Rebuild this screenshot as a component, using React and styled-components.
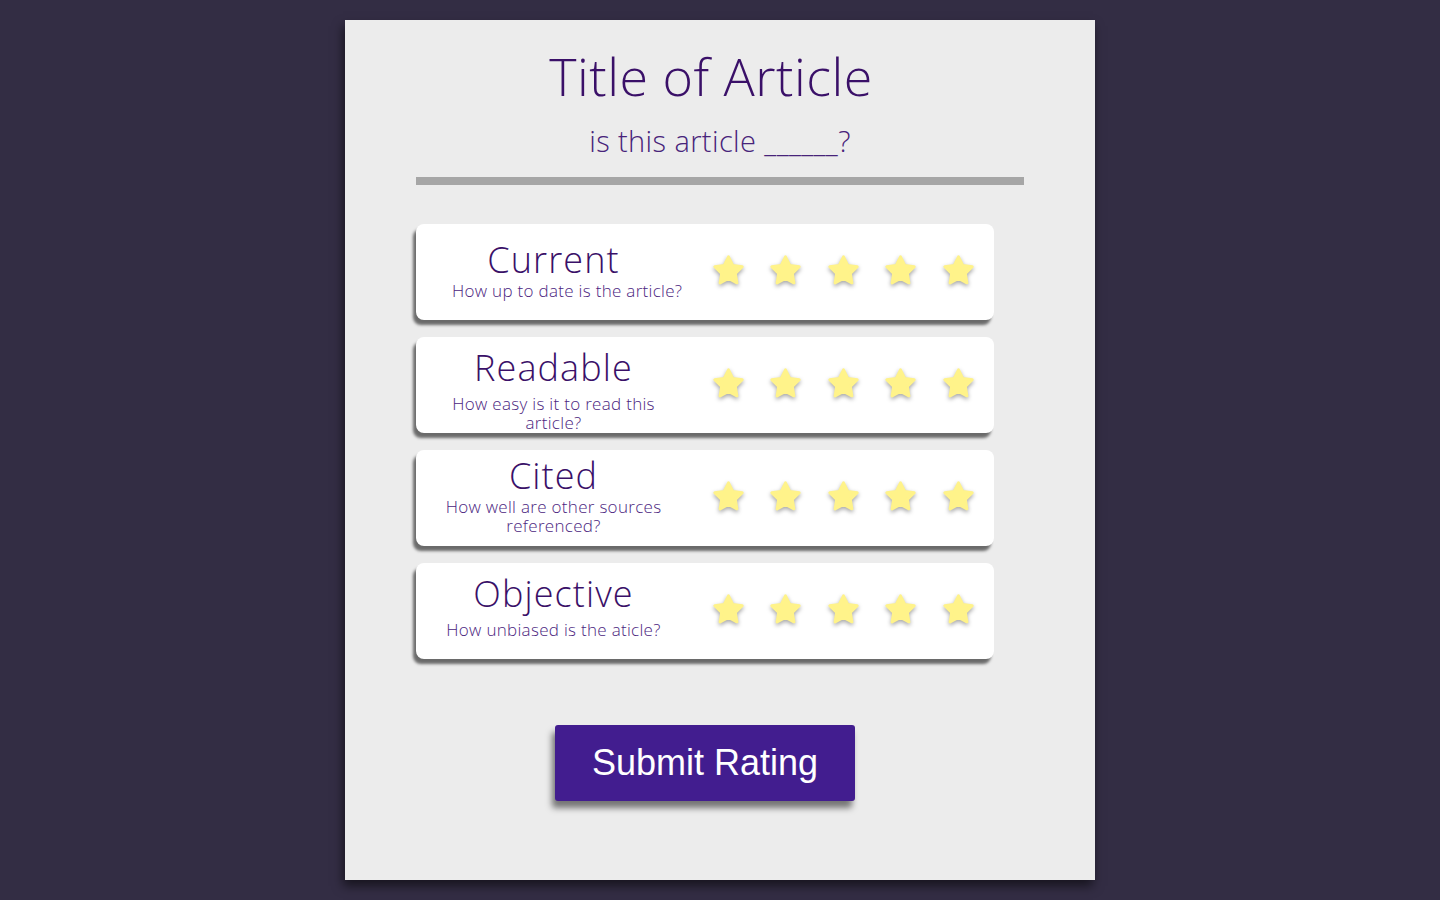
import React from 'react';
import styled, { createGlobalStyle } from 'styled-components';

const GlobalStyle = createGlobalStyle`
  body {
    margin: 0;
    background: #332d44;
    font-family: 'Open Sans', 'Noto Sans', sans-serif;
  }
`;

const Page = styled.div`
  display: flex;
  justify-content: center;
  padding-top: 20px;
  min-height: 100vh;
  box-sizing: border-box;
`;

const Panel = styled.main`
  width: 750px;
  height: 860px;
  box-sizing: border-box;
  padding: 0 71px;
  background: #ececec;
  box-shadow: -2px 6px 10px rgba(0, 0, 0, 0.55);
  display: flex;
  flex-direction: column;
`;

const Title = styled.h1`
  margin: 23px 18px 0 0;
  text-align: center;
  font-weight: 300;
  font-size: 52px;
  line-height: 66px;
  color: #3a1068;
  letter-spacing: 0.5px;
`;

const Question = styled.h2`
  margin: 12px 0 0;
  text-align: center;
  font-weight: 300;
  font-size: 29px;
  line-height: 40px;
  color: #47237a;
  letter-spacing: 0.4px;
`;

const Divider = styled.hr`
  margin: 16px 0 0;
  border: none;
  height: 8px;
  background: #a6a6a6;
`;

const RatingList = styled.section`
  width: 578px;
  margin-top: 39px;
  display: flex;
  flex-direction: column;
  gap: 17px;
`;

const RatingCard = styled.div`
  height: 96px;
  display: flex;
  align-items: flex-start;
  background: #ffffff;
  border-radius: 8px;
  box-shadow: -3px 5px 3px rgba(0, 0, 0, 0.55);
`;

const Criterion = styled.div`
  width: 215px;
  margin-left: 30px;
  flex-shrink: 0;
  display: flex;
  flex-direction: column;
  align-items: center;
  text-align: center;
  padding-top: ${(p) => p.$top}px;
`;

const Label = styled.div`
  font-weight: 300;
  font-size: 36px;
  line-height: 36px;
  color: #3a1068;
  letter-spacing: 1.1px;
  margin-bottom: ${(p) => p.$gap}px;
`;

const Hint = styled.div`
  align-self: ${(p) => (p.$overflow ? 'flex-start' : 'center')};
  margin-left: ${(p) => (p.$overflow ? '6px' : '0')};
  font-weight: 300;
  font-size: 17px;
  line-height: 19px;
  letter-spacing: 0.3px;
  color: #4b2580;
  white-space: nowrap;
`;

const Stars = styled.div`
  align-self: center;
  display: flex;
  gap: 22.5px;
  margin: 0 0 4px 49.5px;
`;

const StarIcon = styled.svg`
  width: 35px;
  height: 35px;
  filter: drop-shadow(0 2px 2px rgba(0, 0, 0, 0.35));
`;

const SubmitButton = styled.button`
  align-self: center;
  margin: 66px 0 0 -30px;
  width: 300px;
  height: 76px;
  border: none;
  border-radius: 3px;
  background: #421d8f;
  color: #ffffff;
  font-family: 'Liberation Sans', Arial, sans-serif;
  font-size: 36px;
  box-shadow: -3px 7px 6px rgba(0, 0, 0, 0.5);
  cursor: pointer;
`;

const criteria = [
  { label: 'Current', hint: ['How up to date is the article?'], top: 18, gap: 3, overflow: true },
  { label: 'Readable', hint: ['How easy is it to read this', 'article?'], top: 13, gap: 8 },
  { label: 'Cited', hint: ['How well are other sources', 'referenced?'], top: 8, gap: 3 },
  { label: 'Objective', hint: ['How unbiased is the aticle?'], top: 13, gap: 8 },
];

function Star() {
  return (
    <StarIcon viewBox="0 0 24 24">
      <path
        d="M12 2.6l2.9 5.9 6.5.9-4.7 4.6 1.1 6.5L12 17.4l-5.8 3.1 1.1-6.5-4.7-4.6 6.5-.9z"
        fill="#fff38a"
        stroke="#fff38a"
        strokeWidth="2"
        strokeLinejoin="round"
      />
    </StarIcon>
  );
}

export default function App() {
  return (
    <Page>
      <GlobalStyle />
      <Panel>
        <Title>Title of Article</Title>
        <Question>is this article ______?</Question>
        <Divider />
        <RatingList>
          {criteria.map((c) => (
            <RatingCard key={c.label}>
              <Criterion $top={c.top}>
                <Label $gap={c.gap}>{c.label}</Label>
                {c.hint.map((line) => (
                  <Hint key={line} $overflow={c.overflow}>
                    {line}
                  </Hint>
                ))}
              </Criterion>
              <Stars>
                {[1, 2, 3, 4, 5].map((n) => (
                  <Star key={n} />
                ))}
              </Stars>
            </RatingCard>
          ))}
        </RatingList>
        <SubmitButton>Submit Rating</SubmitButton>
      </Panel>
    </Page>
  );
}
